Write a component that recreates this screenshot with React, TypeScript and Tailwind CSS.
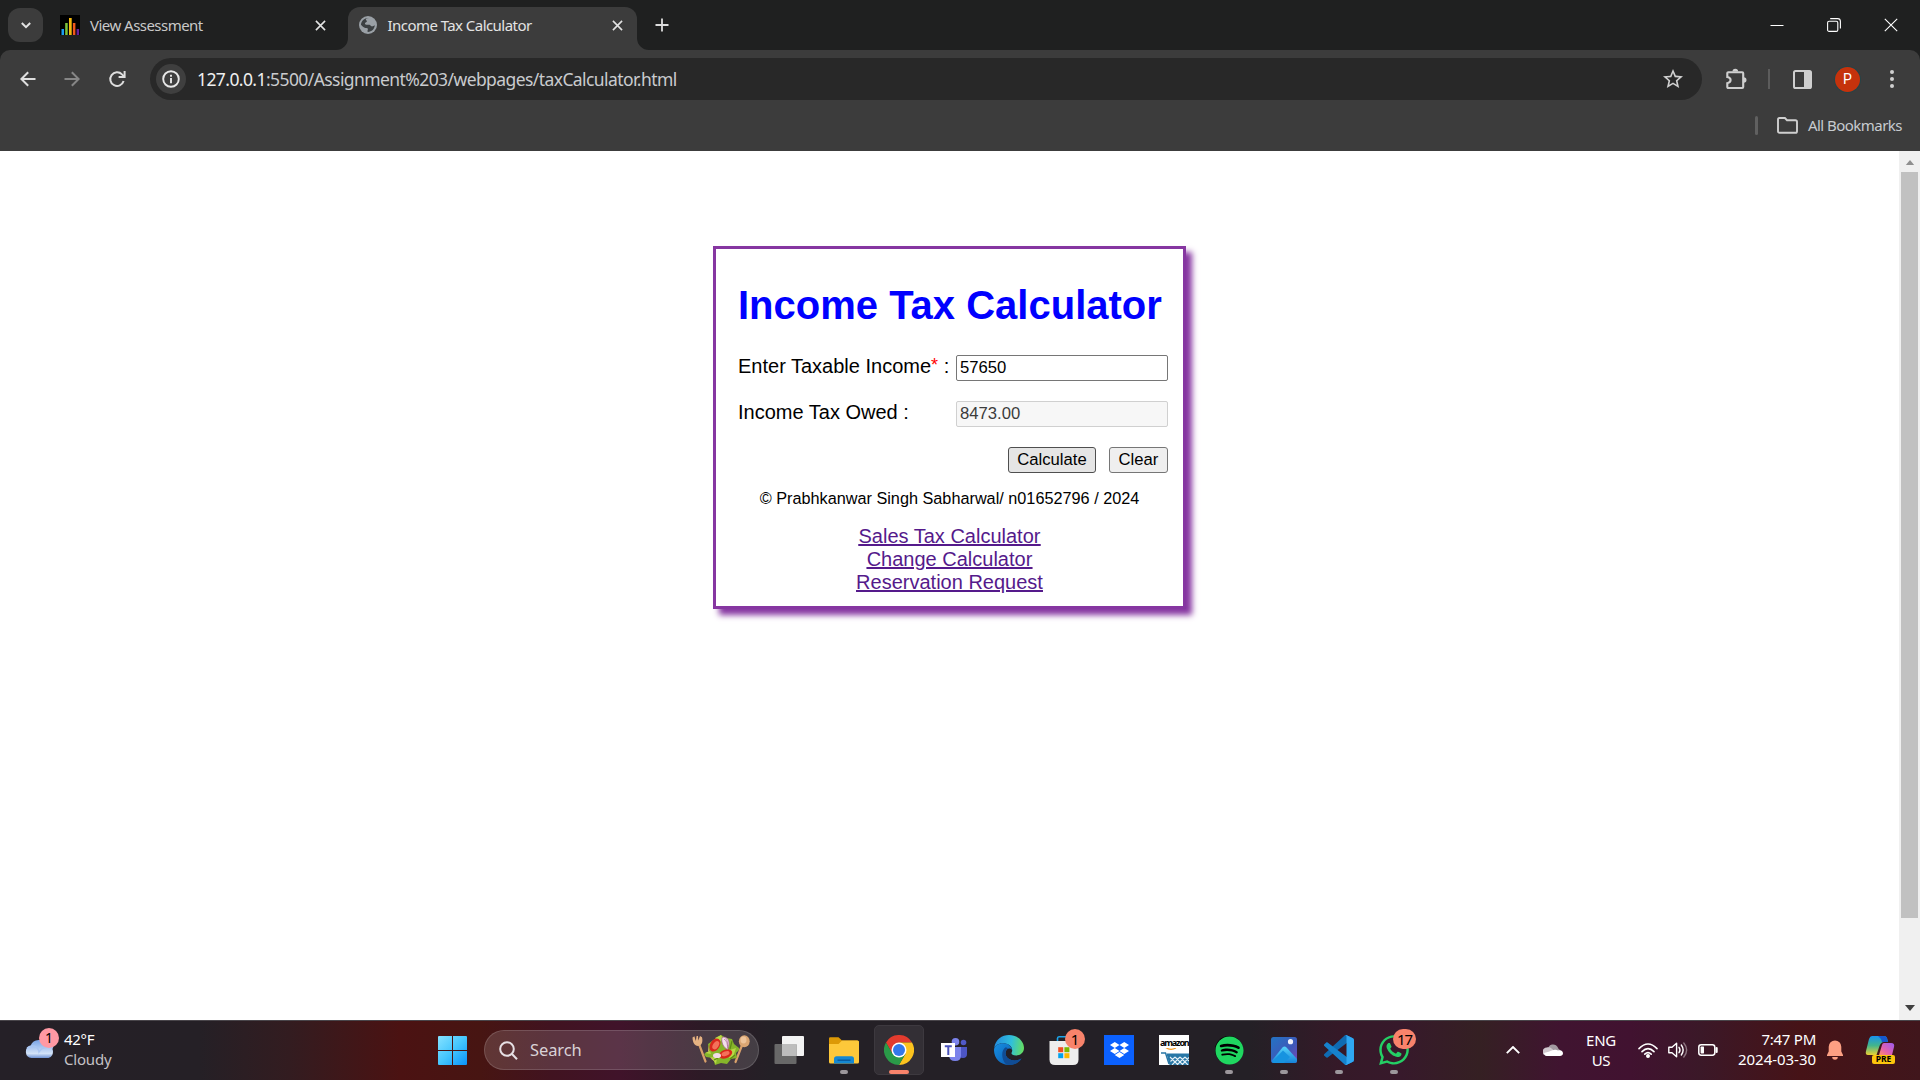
import React from "react";
import { FaDropbox, FaSpotify, FaWhatsapp } from "react-icons/fa";

const TITLE = "Income Tax Calculator";

function Close({ className = "" }: { className?: string }) {
  return (
    <svg viewBox="0 0 12 12" className={"h-[11px] w-[11px] " + className} fill="none" stroke="#e3e3e3" strokeWidth="1.7">
      <path d="M1 1l10 10M11 1L1 11" />
    </svg>
  );
}

function TabStrip() {
  return (
    <div className="flex h-[50px] w-full items-start bg-[#1f2020] font-['Noto_Sans',sans-serif] text-[15px]">
      <div className="ml-2 mt-2 flex h-[34px] w-[35px] items-center justify-center rounded-[12px] bg-[#3c3c3c]">
        <svg viewBox="0 0 10 7" className="h-[7px] w-[10px]" fill="none" stroke="#e3e3e3" strokeWidth="2">
          <path d="M0.8 1L5 5.2 9.2 1" />
        </svg>
      </div>
      <div className="ml-[17px] flex h-[50px] w-[276px] items-center">
        <svg viewBox="0 0 20 20" className="h-5 w-5 shrink-0">
          <rect width="20" height="20" fill="#000" />
          <rect x="1.5" y="14" width="2.5" height="6" fill="#1b9cf0" />
          <rect x="5.2" y="8" width="2.5" height="12" fill="#7cc33a" />
          <rect x="9" y="3" width="2.7" height="17" fill="#f2b90f" />
          <rect x="12.9" y="8" width="2.5" height="12" fill="#f0581c" />
          <rect x="16.6" y="14" width="2.5" height="6" fill="#65209a" />
        </svg>
        <span className="ml-[10px] w-[224.5px] whitespace-nowrap tracking-[-0.53px] text-[#c9c9c9]">View Assessment</span>
        <Close className="shrink-0" />
      </div>
      <svg viewBox="0 0 12 12" className="mt-[38px] h-3 w-3 shrink-0">
        <path d="M12 0V12H0A12 12 0 0 0 12 0Z" fill="#3c3c3c" />
      </svg>
      <div className="mt-[7px] flex h-[43px] w-[289px] items-center rounded-t-[12px] bg-[#3c3c3c] pb-[7px] pl-[11px]">
        <svg viewBox="0 0 20 20" className="h-[18px] w-[18px] shrink-0">
          <circle cx="10" cy="10" r="10" fill="#9aa0a6" />
          <path d="M10.8 2.2C7.5 2.5 7 4.2 8.4 5.1c1.2.8-.3 1.8-1.4 2.3-1 .6-.2 2.2 1.2 2.2h3.2c1.7 0 1.2 1.7 2.6 1.9 1 .2 2.5-.4 3.6-1.1-.4 4-3.4 7.3-7.7 7.4-.9-1-.2-2.3 0-3.2.2-1.2-1.3-1.2-2.8-1.3-1.8-.2-3.7-1.9-4.9-3.5C2.4 5.5 6 2 10.8 2.2Z" fill="#3c4043" />
        </svg>
        <span className="ml-[10.5px] w-[224.5px] whitespace-nowrap tracking-[-0.55px] text-[#e3e3e3]">{TITLE}</span>
        <Close className="shrink-0" />
      </div>
      <svg viewBox="0 0 12 12" className="mt-[38px] h-3 w-3 shrink-0">
        <path d="M0 0V12H12A12 12 0 0 1 0 0Z" fill="#3c3c3c" />
      </svg>
      <svg viewBox="0 0 14 14" className="ml-[6px] mt-[18px] h-[14px] w-[14px] shrink-0" stroke="#dcdcdc" strokeWidth="1.8">
        <path d="M7 0.5V13.5M0.5 7H13.5" />
      </svg>
      <div className="ml-auto mr-[22px] flex h-[49px] items-center gap-[43px]">
        <svg viewBox="0 0 14 14" className="h-[14px] w-[14px]" stroke="#fff" strokeWidth="1"><path d="M0.5 7.5H13.5" /></svg>
        <svg viewBox="0 0 14 14" className="h-[14px] w-[14px]" fill="none" stroke="#fff" strokeWidth="1.1">
          <rect x="0.6" y="3.2" width="10.2" height="10.2" rx="1.5" />
          <path d="M3.2 0.6H10.6A2.8 2.8 0 0 1 13.4 3.4V10.6" />
        </svg>
        <svg viewBox="0 0 14 14" className="h-[14px] w-[14px]" stroke="#fff" strokeWidth="1.1"><path d="M0.8 0.8L13.2 13.2M13.2 0.8L0.8 13.2" /></svg>
      </div>
    </div>
  );
}

function Toolbar() {
  return (
    <div className="bg-[#1f2020]">
      <div className="h-[101px] rounded-t-[10px] bg-[#3c3c3c] font-['Noto_Sans',sans-serif]">
        <div className="flex h-[58px] items-center">
          <svg viewBox="0 0 16 16" className="ml-[20px] h-4 w-4" fill="none" stroke="#dedede" strokeWidth="2"><path d="M15.5 8H2M8.2 1.2L1.4 8l6.8 6.8" /></svg>
          <svg viewBox="0 0 16 16" className="ml-[28px] h-4 w-4" fill="none" stroke="#868686" strokeWidth="2"><path d="M0.5 8H14M7.8 1.2L14.6 8l-6.8 6.8" /></svg>
          <svg viewBox="0 0 18 18" className="ml-[28px] h-[18px] w-[18px]" fill="none" stroke="#dedede" strokeWidth="2">
            <path d="M15.6 11A6.8 6.8 0 1 1 14 4.4L16.2 6.6" />
            <path d="M16.6 1V7H10.6" />
          </svg>
          <div className="ml-[24px] flex h-[42px] w-[1552px] items-center rounded-full bg-[#282828]">
            <div className="ml-[6px] flex h-[30px] w-[30px] items-center justify-center rounded-full bg-[#3f3f3f]">
              <svg viewBox="0 0 18 18" className="h-[18px] w-[18px]" fill="none" stroke="#e8e8e8" strokeWidth="1.9">
                <circle cx="9" cy="9" r="7.8" />
                <path d="M9 8V13.2M9 4.8V6.7" />
              </svg>
            </div>
            <span className="ml-[11px] whitespace-nowrap text-[17.5px] tracking-[-0.58px] text-[#c9cbce]">
              <span className="text-[#efefef]">127.0.0.1</span>:5500/Assignment%203/webpages/taxCalculator.html
            </span>
            <svg viewBox="0 0 24 24" className="ml-auto mr-[17px] h-6 w-6" fill="#d0d0d0">
              <path d="M22 9.24l-7.19-.62L12 2 9.19 8.63 2 9.24l5.46 4.73L5.82 21 12 17.27 18.18 21l-1.63-7.03L22 9.24zM12 15.4l-3.76 2.27 1-4.28-3.32-2.88 4.38-.38L12 6.1l1.71 4.04 4.38.38-3.32 2.88 1 4.28L12 15.4z" />
            </svg>
          </div>
          <svg viewBox="0 0 22 22" className="ml-[23px] h-[22px] w-[22px]">
            <path d="M3.3 4.2H17.2Q18.2 4.2 18.2 5.2V19Q18.2 20 17.2 20H3.3Q2.3 20 2.3 19V15.2Q5.6 14.6 5.6 12.1T2.3 9V5.2Q2.3 4.2 3.3 4.2Z" fill="none" stroke="#cfcfcf" strokeWidth="2.1" />
            <path d="M7.5 3.5a2.8 2.8 0 0 1 5.6 0ZM18.7 9.2a2.8 2.8 0 0 1 0 5.6Z" fill="#cfcfcf" />
          </svg>
          <div className="ml-[21px] h-5 w-[2px] bg-[#5c5c5c]" />
          <svg viewBox="0 0 19 19" className="ml-[23px] h-[19px] w-[19px]">
            <rect x="1" y="1" width="17" height="17" rx="1.6" fill="none" stroke="#cfcfcf" strokeWidth="2" />
            <rect x="11" y="1" width="7" height="17" fill="#cfcfcf" />
          </svg>
          <div className="ml-[23px] flex h-[25px] w-[25px] items-center justify-center rounded-full bg-[#c5320c] font-['Roboto',sans-serif] text-[14px] text-white ring-1 ring-[#264347]">P</div>
          <svg viewBox="0 0 4 18" className="ml-[30px] h-[18px] w-1" fill="#cfcfcf"><circle cx="2" cy="2" r="2" /><circle cx="2" cy="9" r="2" /><circle cx="2" cy="16" r="2" /></svg>
        </div>
        <div className="flex h-[34px] items-center justify-end pr-[18px]">
          <div className="h-[19px] w-[3px] rounded bg-[#606060]" />
          <svg viewBox="0 0 21 17" className="ml-[19px] h-[17px] w-[21px]" fill="none" stroke="#cfcfcf" strokeWidth="1.9">
            <path d="M2.4 1H7.9L10 3.2H18.4Q20 3.2 20 4.8V14.2Q20 15.8 18.4 15.8H2.6Q1 15.8 1 14.2V2.6Q1 1 2.4 1Z" />
          </svg>
          <span className="ml-[10px] text-right text-[15px] tracking-[-0.53px] text-[#c7cbd0]">All Bookmarks</span>
        </div>
      </div>
    </div>
  );
}

function Calculator() {
  return (
    <div className="ml-[713px] mt-[95px] h-[363px] w-[473px] border-[3px] border-[#8636a1] bg-white pl-[22px] pr-[15px] font-['Liberation_Sans',Arial,sans-serif] text-[20px] leading-[23px] text-black shadow-[6px_6px_6px_#8636a1]">
      <h1 className="whitespace-nowrap pt-[33px] text-[40px] font-bold leading-[46px] text-[#0000ff]">{TITLE}</h1>
      <div className="mt-[27px] flex h-[26px] items-center">
        <span className="w-[218px] whitespace-nowrap pb-[3px]">
          Enter Taxable Income<span className="relative -top-[2px] text-[18px] text-[#ff0000]">*</span> :
        </span>
        <div className="flex h-[26px] w-[212px] items-center rounded-[2px] border border-[#767676] bg-white pb-[2px] pl-[3px] text-[16.67px]">57650</div>
      </div>
      <div className="mt-[20px] flex h-[26px] items-center">
        <span className="w-[218px] whitespace-nowrap pb-[3px]">Income Tax Owed :</span>
        <div className="flex h-[26px] w-[212px] items-center rounded-[2px] border border-[#d0d0d0] bg-[#f7f7f7] pb-[2px] pl-[3px] text-[16.67px] text-[#3c3c3c]">8473.00</div>
      </div>
      <div className="mt-[20px] flex h-[26px] justify-end gap-[13px] text-[16.67px] leading-[22px]">
        <button className="w-[88px] rounded-[3px] border border-[#4f4f4f] bg-[#e5e5e5]">Calculate</button>
        <button className="w-[59px] rounded-[3px] border border-[#767676] bg-[#efefef]">Clear</button>
      </div>
      <div className="-ml-[22px] -mr-[15px] text-center">
        <p className="mt-[15px] text-[16.25px] leading-[20px]">© Prabhkanwar Singh Sabharwal/ n01652796 / 2024</p>
        <div className="mt-[17px] flex flex-col items-center text-[#551a8b] underline">
          <a>Sales Tax Calculator</a>
          <a>Change Calculator</a>
          <a>Reservation Request</a>
        </div>
      </div>
    </div>
  );
}

function Page() {
  return (
    <div className="flex h-[869px] bg-white">
      <div className="w-[1899px]"><Calculator /></div>
      <div className="flex w-[21px] flex-col items-center bg-[#f0f0f0]">
        <svg viewBox="0 0 10 6" className="mt-[9px] h-[5px] w-[10px]" fill="#8f8f8f"><path d="M5 0L10 6H0Z" /></svg>
        <div className="mr-px mt-[7px] h-[746px] w-[17px] bg-[#c1c1c1]" />
        <svg viewBox="0 0 10 6" className="mb-[9px] mt-auto h-[6px] w-[10px]" fill="#404040"><path d="M0 0H10L5 6Z" /></svg>
      </div>
    </div>
  );
}

function Badge({ children, className }: { children: React.ReactNode; className: string }) {
  return <div className={"absolute flex h-5 items-center justify-center rounded-full leading-none text-black " + className}>{children}</div>;
}

function TaskbarApp({ children, mark }: { children: React.ReactNode; mark?: "run" | "active" }) {
  return (
    <div className="relative flex h-[60px] w-[55px] items-center justify-center">
      {mark === "active" && <div className="absolute left-[2px] top-[5px] h-[50px] w-[50px] rounded-[5px] border border-[#3d393f] bg-[#332f35]" />}
      <div className="relative flex h-[30px] w-[30px] items-center justify-center">{children}</div>
      {mark === "run" && <div className="absolute top-[50px] h-[4px] w-[8px] rounded-full bg-[#9c979c]" />}
      {mark === "active" && <div className="absolute top-[50px] h-[4px] w-5 rounded-full bg-[#f8836b]" />}
    </div>
  );
}

function Salad() {
  return (
    <svg viewBox="0 0 58 30" className="h-[30px] w-[58px]">
      <g stroke="#d9a06a" strokeWidth="2.2" strokeLinecap="round"><path d="M7 9L13.5 26.5M50.5 9L43.5 27" /></g>
      <path d="M0.5 2.5L2.4 1.2 3.8 6 4.6 1 6 1 6.3 5.6 8 1 10 2.2C11.2 7 9.5 11 6 11S0.6 7 0.5 2.5Z" fill="#e5b282" />
      <ellipse cx="52.3" cy="6.2" rx="5.4" ry="6" fill="#dba673" /><ellipse cx="51.5" cy="5" rx="3" ry="3.4" fill="#eec49a" />
      <circle cx="28.5" cy="15.5" r="12.5" fill="#dd9f72" />
      <path d="M12 19l5-3-1-7 7-5 6-4 5 3 6 1 2 5 5 4 0 2-3 3 1 5-6 1-4 5-6-1-6 2-2-7-7-1Z" fill="#86b52a" />
      <path d="M23 3l6-3 2 4-4 3ZM38 15l6-2-3 9-4 1ZM19 22l6 1-1 6ZM13 18l5-2 1 3Z" fill="#b9d845" />
      <path d="M40 6l-2 8M43 20l-5 4M22 25l4-2" stroke="#5d8a14" strokeWidth="1.2" />
      <ellipse cx="23" cy="10" rx="4.8" ry="7" fill="#d9271c" transform="rotate(32 23 10)" /><ellipse cx="23.8" cy="10.2" rx="2.8" ry="4.6" fill="#f4715a" transform="rotate(32 23.8 10.2)" />
      <ellipse cx="33.5" cy="19" rx="7" ry="4.2" fill="#d9271c" transform="rotate(-20 33.5 19)" /><ellipse cx="33.5" cy="18.6" rx="4.2" ry="2.2" fill="#f4715a" transform="rotate(-20 33.5 18.6)" />
      <path d="M30 2.5c5-2 9.5 4 5.5 12-4-2-6.5-7-5.5-12Z" fill="#f2e0ea" stroke="#a45a8e" strokeWidth=".7" /><path d="M32 4c3 2 3.5 5 3.5 9M33.5 3.5c2 2 2.5 5 2 8" stroke="#a45a8e" strokeWidth=".6" fill="none" />
      <ellipse cx="25" cy="20.5" rx="4" ry="2.6" fill="#f2dce6" />
    </svg>
  );
}

function Taskbar() {
  return (
    <div className="relative flex h-[60px] items-center bg-[linear-gradient(90deg,#252027_0px,#252026_200px,#331c20_290px,#4b1212_400px,#471512_480px,#411320_550px,#40132a_620px,#2d1a26_700px,#242026_770px,#242026_1250px,#351928_1340px,#37192b_1400px,#352023_1480px,#401430_1560px,#411230_1630px,#3b1828_1700px,#461317_1800px,#40161c_1920px)] font-['Noto_Sans',sans-serif] text-[15px] text-white shadow-[inset_0_1px_0_#49454a]">
      <div className="relative mb-[14px] ml-[25px] flex h-[30px] w-[30px] items-end">
        <svg viewBox="0 0 30 20" className="h-5 w-[30px]">
          <defs><linearGradient id="cl" x1="0" y1="0" x2="0" y2="1"><stop offset="0" stopColor="#7aa4e6" /><stop offset=".75" stopColor="#d2e2f8" /><stop offset="1" stopColor="#6e92d4" /></linearGradient></defs>
          <path d="M6.5 20A6.2 6.2 0 0 1 5.6 7.8 9 9 0 0 1 22 7 6.7 6.7 0 0 1 23.5 20Z" fill="url(#cl)" />
          <path d="M2 10C7 6 13 8 14 14 17 9 23 8 28 10" fill="none" stroke="#a9c5f2" strokeWidth="1.4" />
        </svg>
        <Badge className="left-[14px] top-0 w-5 bg-[#ff99a4] text-[14px]">1</Badge>
      </div>
      <div className="mb-[3px] ml-[9px] w-[80px] leading-5">
        <div className="tracking-[-0.3px]">42°F</div>
        <div className="tracking-[-0.2px] text-[#c4c1c5]">Cloudy</div>
      </div>
      <svg viewBox="0 0 29 29" className="ml-[294px] h-[29px] w-[29px]">
        <defs><linearGradient id="wn" x1="0" y1="0" x2="29" y2="29" gradientUnits="userSpaceOnUse"><stop offset="0" stopColor="#86e2ff" /><stop offset=".5" stopColor="#45c6fd" /><stop offset="1" stopColor="#0a93fb" /></linearGradient></defs>
        <path d="M1 0H14V14H0V1Q0 0 1 0ZM15 0H28Q29 0 29 1V14H15ZM0 15H14V29H1Q0 29 0 28ZM15 15H29V28Q29 29 28 29H15Z" fill="url(#wn)" />
      </svg>
      <div className="ml-[17px] flex h-10 w-[275px] items-center rounded-full border border-white/15 bg-white/[0.14] pr-[8px]">
        <svg viewBox="0 0 19 19" className="ml-[14px] h-[19px] w-[19px]" fill="none" stroke="#e6e0e4" strokeWidth="2"><circle cx="8" cy="8" r="6.8" /><path d="M13 13L18 18.2" /></svg>
        <span className="ml-[12px] mt-px text-[16.5px] tracking-[-0.1px] text-[#d9d1d6]">Search</span>
        <div className="ml-auto"><Salad /></div>
      </div>
      <div className="ml-[2.5px] flex">
        <TaskbarApp>
          <svg viewBox="0 0 30 30" className="h-[30px] w-[30px]">
            <rect x="8" y="1" width="22" height="20" rx="1" fill="#f3f3f3" />
            <rect x="0.5" y="9" width="22" height="20" rx="1" fill="#686868" />
            <rect x="8" y="9" width="14.5" height="12" fill="#bdbdbd" />
          </svg>
        </TaskbarApp>
        <TaskbarApp mark="run">
          <svg viewBox="0 0 30 30" className="h-[30px] w-[30px]">
            <path d="M0 3.5Q0 2.2 1.3 2.2H9.5L13 5.5H28Q30 5.5 30 7V15H0Z" fill="#dc9906" />
            <path d="M0 9H9.5L13 5.5H28.5Q30 5.5 30 7V27Q30 28.5 28.5 28.5H1.5Q0 28.5 0 27Z" fill="#fdc83a" />
            <path d="M5 28.5V24Q5 21.3 7.7 21.3H22.5Q25 21.3 25 24V28.5Z" fill="#1588d2" /><path d="M8.5 25.2H21.5" stroke="#07589c" strokeWidth="1.4" />
          </svg>
        </TaskbarApp>
        <TaskbarApp mark="active">
          <svg viewBox="0 0 48 48" className="h-[30px] w-[30px]">
            <path d="M24 12H44.8A24 24 0 0 0 3.2 12L13.6 30 24 24Z" fill="#e33b2e" />
            <path d="M34.4 30L24 48A24 24 0 0 0 44.8 12H24Z" fill="#fcc31e" />
            <path d="M13.6 30L3.2 12A24 24 0 0 0 24 48L34.4 30 24 34Z" fill="#2a9a48" />
            <circle cx="24" cy="24" r="12" fill="#fff" /><circle cx="24" cy="24" r="9.6" fill="#3478ea" />
          </svg>
        </TaskbarApp>
        <TaskbarApp>
          <svg viewBox="0 0 30 30" className="h-[30px] w-[30px]">
            <circle cx="24.5" cy="7.5" r="2.8" fill="#5059c9" /><path d="M19 12H28V19Q28 23 24 23T19 20Z" fill="#4c55c4" />
            <circle cx="16.5" cy="6.8" r="3.8" fill="#7b83eb" /><path d="M10 12H22V20.5Q22 26 16.2 26T10 20.5Z" fill="#7b83eb" />
            <rect x="2" y="8" width="14" height="14" fill="#fff" /><path d="M5.8 11.2H12.8M9.3 11.2V20" stroke="#4b53bc" strokeWidth="2" />
          </svg>
        </TaskbarApp>
        <TaskbarApp>
          <svg viewBox="0 0 30 30" className="h-[30px] w-[30px]">
            <defs>
              <linearGradient id="e1" x1="2" y1="8" x2="29" y2="12" gradientUnits="userSpaceOnUse"><stop offset="0" stopColor="#2591df" /><stop offset=".55" stopColor="#30bfdc" /><stop offset="1" stopColor="#62dc67" /></linearGradient>
              <linearGradient id="e2" x1="0" y1="10" x2="22" y2="30" gradientUnits="userSpaceOnUse"><stop offset="0" stopColor="#168ee1" /><stop offset="1" stopColor="#0b55ac" /></linearGradient>
            </defs>
            <path d="M0.2 13C1.5 4 8 0 15 0 24 0 30 6.5 30 13 30 18 26 20.4 22 20.4 18.5 20.4 17 19 17.6 17.8 19.5 14 17 9.4 11.5 8.4 6 7.7 1.8 9.8 0.2 13Z" fill="url(#e1)" />
            <path d="M0 15C0 10.5 5 8 10 8.2 15 8.5 18 12 18 15 15.5 12 11.5 14.2 11.5 18.5 11.8 24 20 28 27.5 23.5 25 27.5 20.5 30 15 30 6.5 30 0 23.5 0 15Z" fill="url(#e2)" />
            <path d="M11.8 12.3C7 15 6.8 24 12.5 29.7L17 30C21.5 29.6 25.5 27 27.5 23.5 20 28 11.8 24 11.5 18.5 11.5 16.5 12.4 14.4 14 13.2Z" fill="#104c94" />
          </svg>
        </TaskbarApp>
        <TaskbarApp>
          <svg viewBox="0 0 30 30" className="h-[30px] w-[30px]">
            <path d="M8.5 7V3.5Q8.5 1.8 10 1.8H20Q21.5 1.8 21.5 3.5V7" fill="none" stroke="#1ba3e8" strokeWidth="1.6" />
            <path d="M0.5 6H29.5V24.5Q29.5 30 24 30H6Q0.5 30 0.5 24.5Z" fill="#ededed" />
            <path d="M9.2 12.2H14.2V17.2H9.2Z" fill="#f04e22" /><path d="M15.4 12.2H20.4V17.2H15.4Z" fill="#7db900" /><path d="M9.2 18.2H14.2V23.2H9.2Z" fill="#02a2ec" /><path d="M15.4 18.2H20.4V23.2H15.4Z" fill="#fdb800" />
          </svg>
          <Badge className="-top-[6px] left-4 w-5 bg-[#f8836b] text-[15px]">1</Badge>
        </TaskbarApp>
        <TaskbarApp><div className="flex h-[30px] w-[30px] items-center justify-center bg-[#0b61fe]"><FaDropbox className="h-5 w-[19px] text-white" /></div></TaskbarApp>
        <TaskbarApp>
          <div className="h-[30px] w-[30px] overflow-hidden bg-white">
            <div className="ml-px mt-[3px] text-[9px] font-bold leading-[10px] tracking-[-1.15px] text-black">amazon</div>
            <svg viewBox="0 0 30 17" className="h-[17px] w-[30px]" fill="none">
              <path d="M6 -1Q11 3 17 0" stroke="#f29a22" strokeWidth="1.2" />
              <path d="M2 5H6.5L10 16" stroke="#2877a6" strokeWidth="1.4" />
              <path d="M7.5 5.5H30V17H10.5Z" fill="#2877a6" />
              <path d="M11 9L19 17M16 9L24 17M21 9L29 17M26 9L30 13M16 9L11.5 13.5M21 9L13 17M26 9L18 17M30 9.5L23 17" stroke="#e4f0f6" strokeWidth="1.1" />
            </svg>
          </div>
        </TaskbarApp>
        <TaskbarApp mark="run"><div className="flex h-[28px] w-[28px] items-center justify-center rounded-full bg-black"><FaSpotify className="h-[29px] w-[29px] shrink-0 text-[#1fd760]" /></div></TaskbarApp>
        <TaskbarApp mark="run">
          <svg viewBox="0 0 30 30" className="h-[30px] w-[30px]">
            <defs>
              <linearGradient id="p1" x1="0" y1="0" x2="1" y2="1"><stop offset="0" stopColor="#2374c4" /><stop offset=".6" stopColor="#3f58b8" /><stop offset="1" stopColor="#7a48b8" /></linearGradient>
              <linearGradient id="p2" x1="0" y1="0" x2="0" y2="1"><stop offset="0" stopColor="#57d4fb" /><stop offset="1" stopColor="#1583d9" /></linearGradient>
            </defs>
            <rect x="2" y="2" width="26" height="26" rx="2.5" fill="url(#p1)" />
            <path d="M2.5 26L13.5 12.5Q15.5 10.5 17.5 12.5L28 24V25.5Q28 28 25.5 28H4.5Q3 28 2.5 26Z" fill="url(#p2)" />
            <path d="M3 27L14 15.5 21 22 15 28H4.5Z" fill="#1793e0" />
            <circle cx="21.5" cy="6.7" r="2.6" fill="#f0f2fb" />
          </svg>
        </TaskbarApp>
        <TaskbarApp mark="run">
          <svg viewBox="0 0 100 100" className="h-[30px] w-[30px]">
            <path d="M96.5 10.7L75.9.8C73.5-.4 70.6.1 68.8 2L1.3 63.4c-1.8 1.6-1.8 4.5 0 6.1l5.5 5c1.5 1.4 3.7 1.5 5.3.2L93.4 13.1C96.1 11 100 13 100 16.4V16.1c0-2.3-1.3-4.4-3.5-5.4Z" fill="#0f6bb2" />
            <path d="M96.5 89.3l-20.6 9.9c-2.4 1.2-5.3.7-7.1-1.2L1.3 36.6c-1.8-1.6-1.8-4.5 0-6.1l5.5-5c1.5-1.4 3.7-1.5 5.3-.2l81.3 61.6c2.7 2.1 6.6.1 6.6-3.3v.3c0 2.3-1.3 4.4-3.5 5.4Z" fill="#1682cc" />
            <path d="M75.9 99.1c-2.4 1.2-5.3.7-7.2-1.2 2.3 2.3 6.3.7 6.3-2.6V4.7c0-3.3-4-4.9-6.3-2.6C70.6.2 73.5-.3 75.9.9l20.6 9.9c2.1 1 3.5 3.2 3.5 5.6v67.3c0 2.4-1.4 4.6-3.5 5.6Z" fill="#2fa7f2" />
          </svg>
        </TaskbarApp>
        <TaskbarApp mark="run">
          <FaWhatsapp className="h-[34px] w-[34px] shrink-0 text-[#24cf65]" />
          <Badge className="-top-[6px] left-[14px] w-[23px] bg-[#f8836b] text-[15px] tracking-[-1px]">17</Badge>
        </TaskbarApp>
      </div>
      <svg viewBox="0 0 14 8" className="ml-[84.5px] h-2 w-[14px] shrink-0" fill="none" stroke="#fff" strokeWidth="1.9"><path d="M0.8 7.2L7 1 13.2 7.2" /></svg>
      <svg viewBox="0 0 20 13" className="mb-px ml-[23px] h-[13px] w-5 shrink-0">
        <path d="M5 8A5.2 5.2 0 0 1 15.3 5.5L19 9Z" fill="#a39aa1" /><path d="M4 13A4 4 0 0 1 3.8 4.5C7 3.4 9.5 5.6 10.8 8L17 13Z" fill="#cfc8cd" /><path d="M1 10Q6 9 9.5 7.2C12 6 14 7 15 7.5 18.4 6.6 20 8.5 20 10.2 20 12 18.5 13 17 13H4Q1.6 13 1 10Z" fill="#fff" />
      </svg>
      <div className="mb-px ml-[19px] w-[38px] shrink-0 text-center leading-5 tracking-[-0.3px]"><div>ENG</div><div>US</div></div>
      <svg viewBox="0 0 20 15" className="ml-[18px] h-[15px] w-5 shrink-0" fill="none" stroke="#fff" strokeWidth="1.6" strokeLinecap="round"><path d="M1 5.6Q10-3.6 19 5.6M4 8.6Q10 2.6 16 8.6M6.8 11.2Q10 8.2 13.2 11.2" /><circle cx="10" cy="13" r="1.2" fill="#fff" /></svg>
      <svg viewBox="0 0 20 16" className="ml-[10px] h-4 w-5 shrink-0" fill="none" stroke="#fff" strokeWidth="1.4" strokeLinejoin="round" strokeLinecap="round"><path d="M0.8 5.2H4L8.6 1.2V14.8L4 10.8H0.8ZM11 5.3Q13 8 11 10.7M13.3 3Q17 8 13.3 13" /><path d="M15.8 1Q21.5 8 15.8 15" stroke="#8d7580" /></svg>
      <svg viewBox="0 0 20 12" className="ml-[10px] h-3 w-5 shrink-0" fill="none" stroke="#fff" strokeWidth="1.5"><rect x="0.8" y="0.8" width="16" height="10.4" rx="2.4" /><path d="M18.6 4V8" strokeWidth="2.2" strokeLinecap="round" /><rect x="2.6" y="2.6" width="3.4" height="6.8" rx=".6" fill="#fff" stroke="none" /></svg>
      <div className="mb-[3px] ml-[14px] w-[84px] shrink-0 whitespace-nowrap text-right leading-5"><div className="tracking-[-0.25px]">7:47 PM</div><div className="-ml-4 tracking-[-0.03px]">2024-03-30</div></div>
      <svg viewBox="0 0 18 20" className="ml-[10px] h-5 w-[18px] shrink-0" fill="#fda083"><path d="M9 0.5A6.3 6.3 0 0 1 15.3 6.8V11.5L17 15V16H1V15L2.7 11.5V6.8A6.3 6.3 0 0 1 9 .5ZM6.2 17H11.8A2.8 2.8 0 0 1 6.2 17Z" /></svg>
      <div className="relative ml-[21px] h-[28px] w-[30px] shrink-0">
        <svg viewBox="0 0 30 28" className="h-[28px] w-[30px]">
          <defs>
            <linearGradient id="c1" x1="0" y1="0" x2="0" y2="1"><stop offset="0" stopColor="#1792ed" /><stop offset=".5" stopColor="#42b58c" /><stop offset="1" stopColor="#ead034" /></linearGradient>
            <linearGradient id="c2" x1="1" y1="0" x2="0" y2="1"><stop offset="0" stopColor="#9b5cf0" /><stop offset=".6" stopColor="#e361ae" /><stop offset="1" stopColor="#ff8f68" /></linearGradient>
          </defs>
          <path d="M7 0H19Q22 0 22.5 4L23 6H19Q16 6 14.5 10L11.5 19H3Q0 19 1 15L4 3Q5 0 7 0Z" fill="url(#c1)" />
          <path d="M13 0H19Q22 0 22.5 4L23 6H17Q16 2 13 0Z" fill="#1558cf" />
          <path d="M19 7H26Q30 7 29 11L27 19H14L17 9Q17.5 7 19 7Z" fill="url(#c2)" />
        </svg>
        <div className="absolute left-[7px] top-[19px] flex h-[9px] w-[23px] items-center justify-center rounded-[2px] bg-[#fcc50d] text-[8.5px] font-bold leading-none text-black">PRE</div>
      </div>
    </div>
  );
}

export default function App() {
  return (
    <div className="h-[1080px] w-[1920px] overflow-hidden bg-white">
      <TabStrip />
      <Toolbar />
      <Page />
      <Taskbar />
    </div>
  );
}
